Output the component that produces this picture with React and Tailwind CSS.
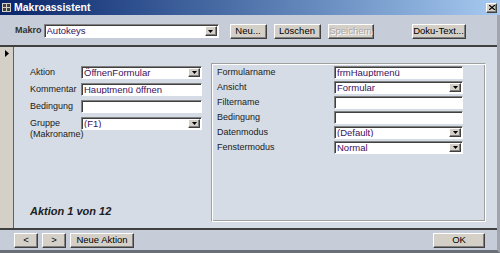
import React from 'react';

const raised =
  'border border-t-white border-l-white border-b-[#404040] border-r-[#404040] shadow-[inset_-1px_-1px_0_#808080] bg-[#d4d0c8]';
const sunken =
  'border border-t-[#808080] border-l-[#808080] border-b-white border-r-white shadow-[inset_1px_1px_0_#404040] bg-white';

const Btn = ({ children, className = '', disabled = false }) => (
  <div
    className={`${raised} shrink-0 flex items-center justify-center h-[15px] text-[9.5px] leading-none whitespace-nowrap ${
      disabled ? 'text-[#a8a8a8] [text-shadow:1px_1px_0_#ffffff]' : 'text-black'
    } ${className}`}
  >
    {children}
  </div>
);

const Arrow = () => (
  <div className={`${raised} w-[12px] h-full flex items-center justify-center shrink-0`}>
    <svg width="5" height="3" viewBox="0 0 5 3">
      <path d="M0 0h5L2.5 3z" fill="#000" />
    </svg>
  </div>
);

const Field = ({ value = '', combo = false, className = '' }) => (
  <div className={`${sunken} shrink-0 flex items-stretch h-[13px] pl-[2px] pr-[1px] py-[1px] ${className}`}>
    <span className="flex-1 text-[9.5px] leading-[10px] text-[#3a1060] truncate whitespace-nowrap">{value}</span>
    {combo && <Arrow />}
  </div>
);

export default function App() {
  const leftRows = [
    { label: 'Aktion', value: 'ÖffnenFormular', combo: true },
    { label: 'Kommentar', value: 'Hauptmenü öffnen' },
    { label: 'Bedingung', value: '' },
    { label: 'Gruppe', sub: '(Makroname)', value: '(F1)', combo: true },
  ];
  const rightRows = [
    { label: 'Formularname', value: 'frmHauptmenü' },
    { label: 'Ansicht', value: 'Formular', combo: true },
    { label: 'Filtername', value: '' },
    { label: 'Bedingung', value: '' },
    { label: 'Datenmodus', value: '(Default)', combo: true },
    { label: 'Fenstermodus', value: 'Normal', combo: true },
  ];

  return (
    <div className="w-[500px] h-[253px] flex flex-col bg-[#c6ccd8] font-['Liberation_Sans',Arial,sans-serif] text-[#202020] overflow-hidden">
      {/* Title bar */}
      <div className="h-[15px] shrink-0 flex items-center bg-gradient-to-r from-[#0a246a] to-[#a6caf0] pl-[2px] pr-[3px]">
        <svg width="9" height="9" viewBox="0 0 9 9" className="mr-[3px]">
          <rect x="0" y="0" width="9" height="9" fill="#d4d0c8" />
          <rect x="1" y="1" width="3" height="3" fill="#404040" />
          <rect x="5" y="1" width="3" height="3" fill="#404040" />
          <rect x="1" y="5" width="3" height="3" fill="#404040" />
          <rect x="5" y="5" width="3" height="3" fill="#404040" />
        </svg>
        <span className="text-white font-bold text-[10.5px] leading-none">Makroassistent</span>
        <div className={`${raised} ml-auto w-[11px] h-[10px] flex items-center justify-center`}>
          <svg width="6" height="5" viewBox="0 0 6 5">
            <path d="M0 0L6 5M6 0L0 5" stroke="#000" strokeWidth="1.2" />
          </svg>
        </div>
      </div>

      <div className="flex-1 flex flex-col border-r-[3px] border-r-[#a0a4ac] border-b-[3px] border-b-[#6a6e76]">
        {/* Header */}
        <div className="h-[32px] shrink-0 flex items-center pl-[15px] pt-[2px] border-b-2 border-b-[#404040]">
          <span className="shrink-0 mr-[2px] text-[9px] font-bold text-[#303030] whitespace-nowrap">Makro</span>
          <Field value="Autokeys" combo className="w-[175px] h-[14px]" />
          <Btn className="ml-[11px] w-[37px]">Neu...</Btn>
          <Btn className="ml-[7px] w-[47px]">Löschen</Btn>
          <Btn disabled className="ml-[7px] w-[46px]">Speichern</Btn>
          <Btn className="ml-[38px] w-[54px]">Doku-Text...</Btn>
        </div>

        {/* Body */}
        <div className="flex-1 flex bg-[#d6dce5]">
          <div className="w-[14px] shrink-0 bg-[#d4d0c8] border-r border-r-[#606060] pt-[3px] pl-[5px]">
            <svg width="4" height="7" viewBox="0 0 4 7">
              <path d="M0 0L4 3.5L0 7z" fill="#000" />
            </svg>
          </div>

          <div className="flex-1 flex">
            <div className="w-[197px] flex flex-col pl-[16px] pt-[19px] pb-[9px]">
              <div className="flex flex-col gap-[4px]">
                {leftRows.map((r) => (
                  <div key={r.label} className="flex items-start">
                    <div className="w-[51px] shrink-0 text-[9px] leading-[11px] pt-[1px] whitespace-nowrap">
                      <div>{r.label}</div>
                      {r.sub && <div>{r.sub}</div>}
                    </div>
                    <Field value={r.value} combo={r.combo} className="w-[121px]" />
                  </div>
                ))}
              </div>
              <div className="mt-auto text-[11px] font-bold italic text-[#202020]">Aktion 1 von 12</div>
            </div>

            <div className="mt-[16px] mb-[6px] w-[275px] border border-t-[#a0a0a0] border-l-[#a0a0a0] border-b-white border-r-white shadow-[inset_1px_1px_0_#ffffff,inset_-1px_-1px_0_#a0a0a0] pl-[5px] pt-[2px]">
              <div className="flex flex-col gap-[2px]">
                {rightRows.map((r) => (
                  <div key={r.label} className="flex items-center">
                    <div className="w-[117px] shrink-0 text-[9px] leading-none whitespace-nowrap">{r.label}</div>
                    <Field value={r.value} combo={r.combo} className="w-[129px]" />
                  </div>
                ))}
              </div>
            </div>
          </div>
        </div>

        {/* Footer */}
        <div className="h-[22px] shrink-0 flex items-center pl-[14px] pr-[12px] border-t-2 border-t-[#404040]">
          <Btn className="w-[24px] h-[14px]">&lt;</Btn>
          <Btn className="ml-[4px] w-[24px] h-[14px]">&gt;</Btn>
          <Btn className="ml-[4px] w-[64px] h-[14px]">Neue Aktion</Btn>
          <Btn className="ml-auto w-[52px] h-[14px]">OK</Btn>
        </div>
      </div>
    </div>
  );
}
